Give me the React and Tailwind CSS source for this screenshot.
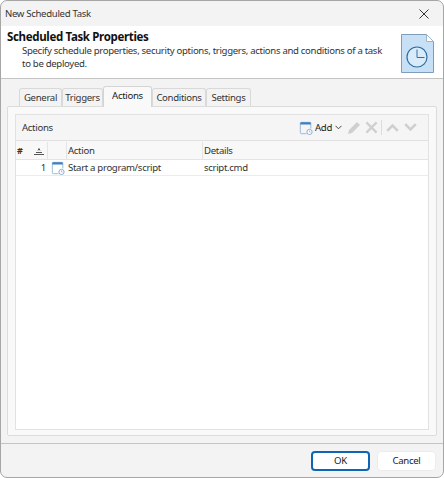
const font = { fontFamily: '"Noto Sans", sans-serif' };

const tabs = [
  { label: 'General', width: 'w-[43px]' },
  { label: 'Triggers', width: 'w-[41px]' },
  { label: 'Actions', width: 'w-[49px]', active: true },
  { label: 'Conditions', width: 'w-[54px]' },
  { label: 'Settings', width: 'w-[45px]' },
];

function TaskIcon({ className }) {
  return (
    <svg className={className} viewBox="0 0 16 16" fill="none">
      <path d="M1.5 13.5v-11a1 1 0 0 1 1-1h10a1 1 0 0 1 1 1v6" stroke="#8fb3d4" />
      <path d="M1.5 13.5a1 1 0 0 0 1 1h6" stroke="#8fb3d4" />
      <path d="M1.5 2.5a1 1 0 0 1 1-1h10a1 1 0 0 1 1 1v1.5h-12z" fill="#3f7fbf" />
      <circle cx="12" cy="12.5" r="3" fill="#fff" stroke="#7fa6cb" />
      <path d="M12 10.8v1.8h1.4" stroke="#7fa6cb" strokeWidth="0.7" />
    </svg>
  );
}

function FileClockIcon() {
  return (
    <svg className="w-[33px] h-[39px]" viewBox="0 0 33 39" fill="none">
      <path d="M0.5 0.5h25l7 7v31h-32z" fill="#c7e0f5" stroke="#7f9db9" />
      <path d="M25.5 0.5v7h7z" fill="#fff" stroke="#9fb4c7" />
      <circle cx="16" cy="23" r="10" fill="#d9ebf9" stroke="#2f6ea5" strokeWidth="1.2" />
      <path d="M16 15.5v8h7.5" stroke="#2f6ea5" strokeWidth="1" />
    </svg>
  );
}

export default function App() {
  return (
    <div style={font} className="w-[444px] h-[478px] bg-white text-[9.6px] tracking-[-0.32px] leading-[16px] text-[#1a1a1a]">
      <div className="w-full h-full flex flex-col bg-[#f3f3f3] border border-[#a6a6a6] rounded-[7px] overflow-hidden">
        {/* Title bar */}
        <div className="h-[25px] flex-none flex items-center justify-between pl-[4px] pr-[14px]">
          <span className="text-[#333333]">New Scheduled Task</span>
          <svg className="w-[10px] h-[10px]" viewBox="0 0 10 10" stroke="#333" strokeWidth="1">
            <path d="M0.5 0.5l9 9M9.5 0.5l-9 9" />
          </svg>
        </div>

        {/* Header */}
        <div className="h-[53px] flex-none flex justify-between bg-white border-b border-[#c4c4c4] pl-[6px] pr-[9px]">
          <div className="pt-[3px]">
            <div className="font-bold text-[11.5px] tracking-[-0.34px] leading-[16px] text-[#111]">Scheduled Task Properties</div>
            <div className="pl-[15px] w-[380px] leading-[12.5px] text-[#333]">
              Specify schedule properties, security options, triggers, actions and conditions of a task to be deployed.
            </div>
          </div>
          <div className="pt-[8px]">
            <FileClockIcon />
          </div>
        </div>

        {/* Tabs */}
        <div className="flex-1 flex flex-col px-[6px] pt-[7px] pb-[7px]">
          <div className="flex h-[21px] items-end pl-[12px] -mb-px">
            {tabs.map((tab) =>
              tab.active ? (
                <div
                  key={tab.label}
                  className={`${tab.width} h-[21px] relative flex justify-center pt-[1px] bg-[#f9f9f9] border border-b-0 border-[#d4d4d4] rounded-t-[3px]`}
                >
                  {tab.label}
                </div>
              ) : (
                <div
                  key={tab.label}
                  className={`${tab.width} h-[19px] flex justify-center pt-[1px] bg-[#f3f3f3] border border-b-0 border-[#d9d9d9] rounded-t-[3px] text-[#333]`}
                >
                  {tab.label}
                </div>
              ),
            )}
          </div>

          <div className="flex-1 flex flex-col bg-[#f9f9f9] border border-[#dcdcdc] rounded-[2px] pt-[7px] px-[7px] pb-[5px]">
            <div className="flex-1 flex flex-col border border-[#e2e2e2] bg-[#f5f5f5]">
              {/* Toolbar */}
              <div className="h-[26px] flex-none flex items-center justify-between pl-[6px] pr-[11px] border-b border-[#e0e0e0]">
                <span className="text-[#333]">Actions</span>
                <div className="flex items-center">
                  <TaskIcon className="w-[14px] h-[14px]" />
                  <span className="ml-[2px] text-[#222]">Add</span>
                  <svg className="ml-[3px] w-[7px] h-[5px]" viewBox="0 0 7 5" fill="none" stroke="#444">
                    <path d="M0.5 0.8l3 3 3-3" />
                  </svg>
                  <svg className="ml-[5px] w-[14px] h-[14px]" viewBox="0 0 14 14" fill="#cfcfcf">
                    <path d="M10 1l3 3-8 8-4 1 1-4z" />
                  </svg>
                  <svg className="ml-[4px] w-[13px] h-[13px]" viewBox="0 0 14 14" fill="none" stroke="#cfcfcf" strokeWidth="2.4">
                    <path d="M1.5 1.5l11 11M12.5 1.5l-11 11" />
                  </svg>
                  <div className="ml-[3px] mr-[4px] w-px h-[15px] bg-[#dcdcdc]" />
                  <svg className="w-[13px] h-[9px]" viewBox="0 0 13 9" fill="none" stroke="#cfcfcf" strokeWidth="2.6">
                    <path d="M1.2 7.8l5.3-5.3 5.3 5.3" />
                  </svg>
                  <svg className="ml-[5px] w-[13px] h-[9px]" viewBox="0 0 13 9" fill="none" stroke="#cfcfcf" strokeWidth="2.6">
                    <path d="M1.2 1.2l5.3 5.3 5.3-5.3" />
                  </svg>
                </div>
              </div>

              {/* Table */}
              <div className="flex-1 flex flex-col bg-white">
                <div className="h-[19px] flex-none flex items-center pt-px bg-[#f8f8f8] border-b border-[#e4e4e4] text-[#333]">
                  <div className="w-[32px] h-full flex items-center justify-between pl-[1px] pr-[3px] border-r border-[#e4e4e4] font-bold text-[9px]">
                    <span>#</span>
                    <svg className="w-[10px] h-[8px]" viewBox="0 0 10 8" fill="none" stroke="#555">
                      <path d="M0 7.5h10M2 5.5h6M4 3.5l1-2 1 2" />
                    </svg>
                  </div>
                  <div className="w-[19px] h-full border-r border-[#e4e4e4]" />
                  <div className="w-[136px] h-full flex items-center pl-[1px] border-r border-[#e4e4e4]">Action</div>
                  <div className="flex-1 pl-[1px]">Details</div>
                </div>
                <div className="h-[16px] flex-none flex items-center border-b border-[#ececec] text-[#333]">
                  <div className="w-[32px] text-right pr-[2px]">1</div>
                  <div className="w-[19px] flex justify-center">
                    <TaskIcon className="w-[14px] h-[14px]" />
                  </div>
                  <div className="w-[136px] pl-[1px]">Start a program/script</div>
                  <div className="flex-1 pl-[1px]">script.cmd</div>
                </div>
              </div>
            </div>
          </div>
        </div>

        {/* Footer */}
        <div className="h-[34px] flex-none flex items-center justify-end gap-[7px] border-t border-[#c4c4c4] pr-[7px]">
          <button className="w-[59px] h-[20px] bg-white border-2 border-[#0f65b5] rounded-[4px] text-[#1a1a1a]">OK</button>
          <button className="w-[59px] h-[20px] bg-white border border-[#ececec] rounded-[4px] text-[#1a1a1a]">Cancel</button>
        </div>
      </div>
    </div>
  );
}
